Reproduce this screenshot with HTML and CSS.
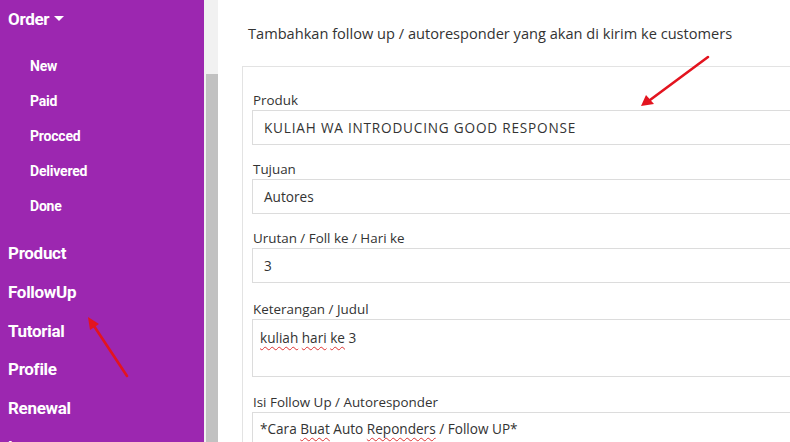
FILE: index.html
```html
<!DOCTYPE html>
<html>
<head>
<meta charset="utf-8">
<link rel="stylesheet" href="styles.css">
</head>
<body>
<div class="app">
  <nav class="sidebar">
    <div class="menu">
      <div class="item order">Order <span class="caret"></span></div>
      <div class="sub">
        <div class="subitem">New</div>
        <div class="subitem">Paid</div>
        <div class="subitem">Procced</div>
        <div class="subitem">Delivered</div>
        <div class="subitem">Done</div>
      </div>
      <div class="item">Product</div>
      <div class="item">FollowUp</div>
      <div class="item">Tutorial</div>
      <div class="item">Profile</div>
      <div class="item">Renewal</div>
      <div class="item">Logout</div>
    </div>
    <div class="scroll"><div class="thumb"></div></div>
  </nav>
  <main class="main">
    <p class="desc">Tambahkan follow up / autoresponder yang akan di kirim ke customers</p>
    <div class="card">
      <div class="group">
        <div class="label">Produk</div>
        <div class="input upper">KULIAH WA INTRODUCING GOOD RESPONSE</div>
      </div>
      <div class="group">
        <div class="label">Tujuan</div>
        <div class="input">Autores</div>
      </div>
      <div class="group wide">
        <div class="label">Urutan / Foll ke / Hari ke</div>
        <div class="input">3</div>
      </div>
      <div class="group gap15">
        <div class="label">Keterangan / Judul</div>
        <div class="textarea"><span class="sp">kuliah</span> <span class="sp">hari</span> <span class="sp">ke</span> 3</div>
      </div>
      <div class="group">
        <div class="label">Isi Follow Up / Autoresponder</div>
        <div class="textarea tall">*Cara <span class="sp">Buat</span> Auto <span class="sp">Reponders</span> / Follow UP*</div>
      </div>
    </div>
  </main>
</div>
<svg class="arrows" width="790" height="442" viewBox="0 0 790 442">
  <line x1="708" y1="57" x2="650" y2="100" stroke="#e3141f" stroke-width="2.6" stroke-linecap="round"/>
  <polygon points="641,106 646,95 654,104" fill="#e3141f"/>
  <line x1="127" y1="376" x2="94" y2="326" stroke="#e3141f" stroke-width="2.6" stroke-linecap="round"/>
  <polygon points="88,317 90,330 99,324" fill="#e3141f"/>
</svg>
</body>
</html>
```
FILE: styles.css
```css
html, body {
  margin: 0;
  padding: 0;
  background: #fff;
  overflow: hidden;
}
body {
  width: 790px;
  height: 442px;
  position: relative;
}
.app {
  display: flex;
  height: 442px;
  overflow: hidden;
}
.sidebar {
  display: flex;
  width: 218px;
  flex: none;
}
.menu {
  width: 204px;
  background: #9c27b0;
  color: #fff;
  font-family: Roboto, "Liberation Sans", sans-serif;
  font-weight: 700;
  padding-left: 8px;
  box-sizing: border-box;
}
.item {
  height: 38.75px;
  line-height: 38.75px;
  font-size: 17px;
  letter-spacing: -0.3px;
}
.order {
  height: 38px;
  line-height: 38px;
  display: flex;
  align-items: center;
  gap: 5px;
}
.caret {
  width: 0;
  height: 0;
  border-left: 5px solid transparent;
  border-right: 5px solid transparent;
  border-top: 5px solid #fff;
  margin-top: -2px;
}
.sub {
  padding: 11px 0 10px 22px;
}
.subitem {
  height: 35px;
  line-height: 35px;
  font-size: 14px;
  letter-spacing: -0.2px;
}
.scroll {
  width: 14px;
  background: #f1f1f1;
  padding-top: 74px;
  box-sizing: border-box;
  display: flex;
  justify-content: flex-end;
}
.thumb {
  width: 12px;
  height: 368px;
  background: #c1c1c1;
}
.main {
  flex: 1;
  padding-left: 24px;
  font-family: "Open Sans", "DejaVu Sans", sans-serif;
  color: #333;
  min-width: 0;
}
.desc {
  margin: 0;
  padding: 23px 0 0 6px;
  height: 66px;
  line-height: 20px;
  font-size: 14.6px;
  box-sizing: border-box;
  white-space: nowrap;
}
.card {
  border: 1px solid #e3e3e3;
  border-right: none;
  padding: 23px 0 0 9px;
  height: 400px;
  box-sizing: border-box;
}
.group {
  margin-bottom: 14px;
}
.group.wide {
  margin-bottom: 16px;
}
.group.gap15 {
  margin-bottom: 15px;
}
.label {
  height: 20px;
  line-height: 20px;
  font-size: 13.4px;
  padding-left: 1px;
  white-space: nowrap;
}
.input, .textarea {
  border: 1px solid #dcdcdc;
  border-right: none;
  box-sizing: border-box;
  font-size: 13.6px;
  color: #333;
  white-space: nowrap;
}
.input {
  height: 35px;
  line-height: 33px;
  padding-left: 11px;
}
.input.upper {
  letter-spacing: 0.8px;
}
.textarea {
  height: 58px;
  line-height: 20px;
  padding: 8px 0 0 7px;
}
.textarea.tall {
  height: 80px;
  padding-top: 6px;
}
.sp {
  text-decoration: underline wavy #d33;
  text-decoration-thickness: 1px;
  text-underline-offset: 3px;
}
.arrows {
  position: absolute;
  left: 0;
  top: 0;
  pointer-events: none;
}
```
